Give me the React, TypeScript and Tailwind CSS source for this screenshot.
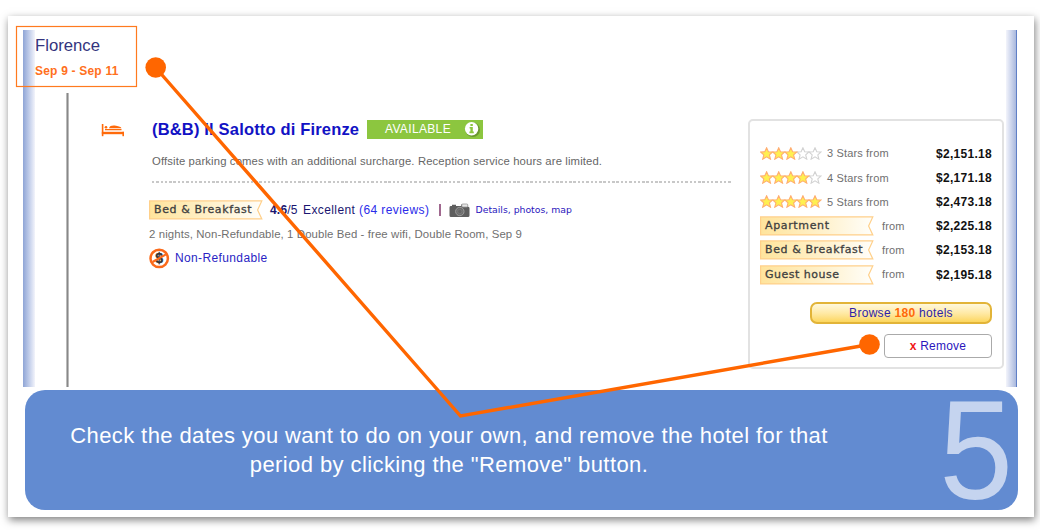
import React from 'react';

const STAR = 'M6.2 0.4 L8 4.3 L12.2 4.6 L9 7.5 L10.1 11.8 L6.2 9.5 L2.3 11.8 L3.4 7.5 L0.2 4.6 L4.4 4.3 Z';

function Stars({ count }: { count: number }) {
  return (
    <svg width="62" height="13" viewBox="0 0 62 13" className="shrink-0">
      {[4, 3, 2, 1, 0].map((i) => (
        <path
          key={i}
          d={STAR}
          transform={`translate(${0.4 + i * 12.1} 0.4)`}
          fill={i < count ? '#fff050' : '#ffffff'}
          stroke={i < count ? '#ffae70' : '#d2d2d2'}
          strokeWidth="1.1"
        />
      ))}
    </svg>
  );
}

function Tag({ label, id, spacing }: { label: string; id: string; spacing: string }) {
  return (
    <div className="relative flex h-5 w-[114px] shrink-0 items-center pl-[5px]">
      <svg className="absolute inset-0" width="114" height="20" viewBox="0 0 114 20">
        <defs>
          <linearGradient id={id} x1="0" x2="1" y1="0" y2="0">
            <stop offset="0" stopColor="#ffe49c" />
            <stop offset="0.55" stopColor="#fff1cb" />
            <stop offset="1" stopColor="#fffefa" />
          </linearGradient>
        </defs>
        <path d="M0.6 0.9 H112.8 L108.6 9.9 L112.8 18.9 H0.6 Z" fill={`url(#${id})`} stroke="#ffd08a" strokeWidth="1.2" />
      </svg>
      <span className={`relative whitespace-nowrap font-['DejaVu_Sans'] text-[11px] leading-4 text-[#404040] [-webkit-text-stroke:0.3px_#404040] ${spacing}`}>
        {label}
      </span>
    </div>
  );
}

function BedIcon() {
  return (
    <svg width="24" height="14" viewBox="0 0 24 14" fill="#ff6a0a">
      <rect x="0.8" y="1" width="1.6" height="12.2" />
      <rect x="0.8" y="8.8" width="22.2" height="2.4" />
      <rect x="21.4" y="8.8" width="1.6" height="4.4" />
      <circle cx="5" cy="4.3" r="1.3" />
      <path d="M4 6 H20.5 V7.2 H4 Z M8 5.2 C8.5 2.6 12 2.2 15 2.8 C18 3.2 20 4 20.5 5.2 Z" />
    </svg>
  );
}

function CameraIcon() {
  return (
    <svg width="21" height="15" viewBox="0 0 21 15">
      <path d="M1.5 3 H3 V1.8 H7 V3 H12 V1.5 H18.5 V3.5 Q20.5 3.5 20.5 5 V12.5 Q20.5 14 19 14 H2 Q0.5 14 0.5 12.5 V4.5 Q0.5 3.2 1.5 3 Z" fill="#5e5e5e" />
      <rect x="12.8" y="1" width="6" height="3" rx="1" fill="#e6e6e6" stroke="#999" strokeWidth="0.8" />
      <circle cx="10.8" cy="8.5" r="4.2" fill="#6c6c6c" stroke="#a0a0a0" strokeWidth="0.9" />
      <circle cx="10.8" cy="8.5" r="2.2" fill="#666" stroke="#858585" strokeWidth="0.6" />
    </svg>
  );
}

function InfoIcon() {
  return (
    <svg width="18" height="18" viewBox="0 0 18 18">
      <circle cx="9.8" cy="9.8" r="7.2" fill="#5c852b" opacity="0.7" />
      <circle cx="8.6" cy="8.8" r="6.7" fill="#fff" />
      <path d="M7.4 4 H9.8 V6 H7.4 Z M6.6 7 H9.8 V11.6 H10.8 V13.2 H6.4 V11.6 H7.4 V8.4 H6.6 Z" fill="#8cc63f" />
    </svg>
  );
}

function NoRefundIcon() {
  return (
    <svg width="21" height="21" viewBox="0 0 21 21">
      <circle cx="10.2" cy="10.4" r="8.7" fill="#fff" stroke="#fb6a1a" strokeWidth="2.5" />
      <text x="10.2" y="15.4" textAnchor="middle" fontFamily="Liberation Sans" fontWeight="bold" fontSize="14" fill="#333" stroke="#333" strokeWidth="0.4">$</text>
      <path d="M3.5 14 L17 6.4" stroke="#fb6a1a" strokeWidth="2.2" />
    </svg>
  );
}

const rates = [
  { stars: 3, price: '$2,151.18' },
  { stars: 4, price: '$2,171.18' },
  { stars: 5, price: '$2,473.18' },
  { tag: 'Apartment', spacing: 'tracking-[0.65px]', price: '$2,225.18' },
  { tag: 'Bed & Breakfast', spacing: 'tracking-[0.6px]', price: '$2,153.18' },
  { tag: 'Guest house', spacing: 'tracking-[0.5px]', price: '$2,195.18' },
];

function RatesCard() {
  return (
    <aside className="flex h-[250px] w-[256px] shrink-0 flex-col rounded-[5px] border-2 border-[#e2e2e2] pr-[10px] pl-[10px] pt-[20.5px]">
      {rates.map((r) => (
        <div key={r.price} className="flex h-[24.2px] items-center">
          {r.stars ? (
            <>
              <Stars count={r.stars} />
              <span className="ml-[5px] text-[11px] tracking-[0.15px] text-[#707070]">{r.stars} Stars from</span>
            </>
          ) : (
            <>
              <Tag label={r.tag!} id={`rate-${r.tag!.slice(0, 3)}`} spacing={r.spacing!} />
              <span className="ml-[8px] text-[11px] tracking-[0.15px] text-[#707070]">from</span>
            </>
          )}
          <span className="ml-auto text-[12px] font-bold tracking-[0.28px] text-[#111]">{r.price}</span>
        </div>
      ))}
      <button className="mt-[15px] flex h-[22px] w-[182px] shrink-0 items-center justify-center self-end rounded-[7px] border-2 border-[#e2b438] bg-linear-to-b from-[#fff8dc] via-[#ffeaa6] to-[#fcd65c] text-[12px] tracking-[0.3px] text-[#2f1fa8]">
        Browse&nbsp;<b className="text-[#ff6a0a]">180</b>&nbsp;hotels
      </button>
      <button className="mt-[10px] flex h-[24px] w-[108px] shrink-0 items-center justify-center self-end rounded-[4px] border border-[#aaa] bg-white text-[12px] tracking-[0.2px] text-[#2a16bd]">
        <b className="text-[#f01818]">x</b>&nbsp;Remove
      </button>
    </aside>
  );
}

function Hotel() {
  return (
    <section className="flex w-[584px] shrink-0 flex-col whitespace-nowrap">
      <div className="flex h-[22px] items-center pl-[3px]">
        <h2 className="w-[207px] pb-px text-[16.5px] leading-5 font-bold tracking-[0.17px] text-[#1212c4]">(B&amp;B) Il Salotto di Firenze</h2>
        <div className="ml-[8px] flex h-[19px] w-[116px] items-center justify-end bg-[#8cc63f] pr-[2px]">
          <span className="mr-[12px] text-[12px] tracking-[0.35px] text-white">AVAILABLE</span>
          <InfoIcon />
        </div>
      </div>
      <p className="mt-[13px] h-[16px] pl-[3px] text-[11.3px] leading-4 tracking-[0.13px] text-[#666]">
        Offsite parking comes with an additional surcharge. Reception service hours are limited.
      </p>
      <div className="mt-[12px] ml-[3px] h-[2px] w-[580px] bg-[repeating-linear-gradient(90deg,#c8c8c8_0_2.4px,#fff_2.4px_4.3px)]" />
      <div className="mt-[17px] flex h-5 items-center">
        <Tag label="Bed & Breakfast" id="hotel-tag" spacing="tracking-[0.6px]" />
        <span className="ml-[7px] w-[28px] text-[12px] tracking-[0.2px] text-[#1a1570]"><b>4.6</b>/5</span>
        <span className="ml-[5px] w-[52px] text-[12px] tracking-[0.4px] text-[#1a1570]">Excellent</span>
        <span className="ml-[4px] w-[71px] text-[12px] tracking-[0.42px] text-[#2b2bea]">(64 reviews)</span>
        <span className="ml-[9px] h-[12px] w-[1.5px] bg-[#a0688f]" />
        <span className="ml-[8px] w-[21px] shrink-0"><CameraIcon /></span>
        <span className="ml-[6px] font-['DejaVu_Sans'] text-[9.3px] text-[#2a16bd]">Details, photos, map</span>
      </div>
      <p className="mt-[6px] h-4 text-[11.4px] leading-4 tracking-[0.1px] text-[#707070]">
        2 nights, Non-Refundable, 1 Double Bed - free wifi, Double Room, Sep 9
      </p>
      <div className="mt-[6px] flex h-[21px] items-center gap-[5px]">
        <NoRefundIcon />
        <span className="pb-[2px] text-[12px] tracking-[0.37px] text-[#2a1fc4]">Non-Refundable</span>
      </div>
    </section>
  );
}

export default function App() {
  return (
    <main className="relative h-[530px] w-[1040px] overflow-hidden bg-white px-[8px] pt-[16px] font-['Liberation_Sans',sans-serif]">
      <div className="flex h-[501px] w-[1026px] flex-col bg-white shadow-[1px_3px_8px_rgba(0,0,0,0.5)]">
        <div className="mt-[14px] ml-[15px] flex h-[357px] w-[994px]">
          <div className="w-[12px] shrink-0 bg-linear-to-r from-[#8fa5d6] to-[#f3f4fb]" />
          <div className="flex min-w-0 flex-1 flex-col">
            <header className="flex h-[63px] flex-col">
              <h1 className="mt-[6px] text-[16.7px] leading-5 text-[#34347e]">Florence</h1>
              <p className="mt-[7px] text-[12px] leading-4 font-bold tracking-[0.2px] text-[#ff7020]">Sep 9 - Sep 11</p>
            </header>
            <div className="flex flex-1 items-start">
              <div className="ml-[31px] w-[3px] self-stretch border-x border-[#bbb] bg-[#888]" />
              <div className="mt-[30px] ml-[32px] w-[24px]"><BedIcon /></div>
              <div className="mt-[25px] ml-[24px]"><Hotel /></div>
              <div className="mt-[26px] ml-[15px]"><RatesCard /></div>
            </div>
          </div>
          <div className="w-[11px] shrink-0 border-r-[1.5px] border-[#5f7fc6] bg-linear-to-r from-[#f3f4fb] to-[#a9b8dd]" />
        </div>
        <footer className="mt-[3px] ml-[17px] flex h-[120px] w-[993px] items-start rounded-[20px] bg-[#628bd1] text-white">
          <p className="mt-[32px] w-[848px] shrink-0 text-center text-[22px] leading-[28.5px] tracking-[0.41px] whitespace-nowrap">
            Check the dates you want to do on your own, and remove the hotel for that
            <br />
            period by clicking the &quot;Remove&quot; button.
          </p>
          <span className="ml-[64px] h-[120px] origin-center scale-x-[0.94] text-[141px] leading-[120px] text-[#c5d4ef]">5</span>
        </footer>
      </div>
      <svg className="pointer-events-none absolute inset-0" width="1040" height="530" viewBox="0 0 1040 530" fill="none">
        <rect x="16.5" y="26.5" width="120" height="60" stroke="#ff7a1f" strokeWidth="1.2" />
        <path d="M155.5 67.5 L460.5 416 L869.5 344.5" stroke="#ff6600" strokeWidth="3.4" />
        <circle cx="155.7" cy="67.5" r="10.3" fill="#ff6600" />
        <circle cx="869.5" cy="344.5" r="10.3" fill="#ff6600" />
      </svg>
    </main>
  );
}
